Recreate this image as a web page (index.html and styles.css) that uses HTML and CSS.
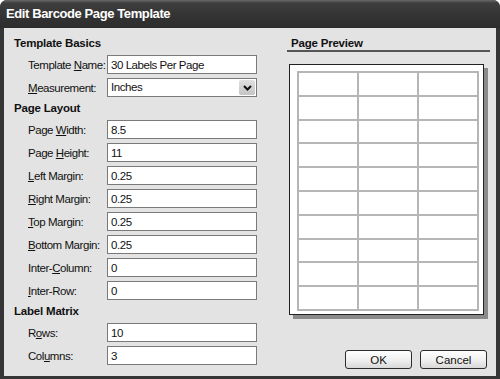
FILE: index.html
```html
<!DOCTYPE html>
<html lang="en">
<head>
    <meta charset="UTF-8">
    <title>Edit Barcode Page Template</title>
    <link rel="stylesheet" href="styles.css">
</head>
<body>
    <div class="window">
        <div class="titlebar">Edit Barcode Page Template</div>
        <div class="content">
            <!-- left side: the form -->
            <div class="form">
                <h2 class="section first">Template Basics</h2>
                <div class="row">
                    <label>Template <u>N</u>ame:</label>
                    <input type="text" value="30 Labels Per Page">
                </div>
                <div class="row">
                    <label><u>M</u>easurement:</label>
                    <div class="select">
                        <span class="select-text">Inches</span>
                        <span class="select-btn">
                            <svg width="9" height="6" viewBox="0 0 9 6"><path d="M1 1 L4.5 4.5 L8 1" fill="none" stroke="#111" stroke-width="2"/></svg>
                        </span>
                    </div>
                </div>

                <h2 class="section">Page Layout</h2>
                <div class="row"><label>Page <u>W</u>idth:</label><input type="text" value="8.5"></div>
                <div class="row"><label>Page <u>H</u>eight:</label><input type="text" value="11"></div>
                <div class="row"><label><u>L</u>eft Margin:</label><input type="text" value="0.25"></div>
                <div class="row"><label><u>R</u>ight Margin:</label><input type="text" value="0.25"></div>
                <div class="row"><label><u>T</u>op Margin:</label><input type="text" value="0.25"></div>
                <div class="row"><label><u>B</u>ottom Margin:</label><input type="text" value="0.25"></div>
                <div class="row"><label>Inter-<u>C</u>olumn:</label><input type="text" value="0"></div>
                <div class="row"><label><u>I</u>nter-Row:</label><input type="text" value="0"></div>

                <h2 class="section">Label Matrix</h2>
                <div class="row"><label>R<u>o</u>ws:</label><input type="text" value="10"></div>
                <div class="row"><label>Col<u>u</u>mns:</label><input type="text" value="3"></div>
            </div>

            <!-- right side: preview and buttons -->
            <div class="side">
                <h2 class="preview-head">Page Preview</h2>
                <div class="preview">
                    <div class="grid" id="grid"></div>
                </div>
                <div class="buttons">
                    <button class="button">OK</button>
                    <button class="button">Cancel</button>
                </div>
            </div>
        </div>
    </div>

    <script>
        // 10 rows x 3 columns of labels
        const grid = document.getElementById('grid');
        for (let i = 0; i < 30; i++) {
            const cell = document.createElement('div');
            cell.className = 'cell';
            grid.appendChild(cell);
        }
    </script>
</body>
</html>
```

FILE: styles.css
```css
body {
    margin: 0;
    background: #fff;
    font-family: "Liberation Sans", Arial, sans-serif;
    color: #111;
}

.window {
    width: 500px;
    height: 379px;
    display: flex;
    flex-direction: column;
    background: #353535;
    border-radius: 7px 7px 0 0;
    overflow: hidden;
}

.titlebar {
    height: 28px;
    padding-left: 6px;
    line-height: 28px;
    font-size: 13px;
    font-weight: bold;
    letter-spacing: -0.4px;
    color: #fff;
    background: linear-gradient(#6a6a6a 0, #3e3e3e 3px, #333 60%, #2c2c2c 100%);
}

.content {
    flex: 1;
    display: flex;
    margin: 0 4px 3px 4px;
    padding: 7px 6px 5px 10px;
    background: #e3e3e3;
}

.form {
    width: 243px;
}

.section {
    margin: 3px 0 2px 0;
    height: 16px;
    line-height: 16px;
    font-size: 11.5px;
    font-weight: bold;
    letter-spacing: -0.2px;
    white-space: nowrap;
}

.section.first {
    margin-top: 0;
}

.row {
    display: flex;
    align-items: center;
    height: 19px;
    margin-top: 4px;
}

.row label {
    flex: 0 0 93px;
    box-sizing: border-box;
    padding-left: 14px;
    font-size: 11.5px;
    letter-spacing: -0.45px;
    white-space: nowrap;
}

.row input {
    width: 150px;
    height: 19px;
    box-sizing: border-box;
    margin: 0;
    padding: 0 3px;
    border: 1px solid #7a7a7a;
    background: #fff;
    font-family: inherit;
    font-size: 11.5px;
    letter-spacing: -0.45px;
    color: #111;
}

.select {
    display: flex;
    width: 150px;
    height: 19px;
    box-sizing: border-box;
    border: 1px solid #7a7a7a;
    background: #fff;
    font-size: 11.5px;
    letter-spacing: -0.45px;
}

.select-text {
    flex: 1;
    padding-left: 3px;
    line-height: 17px;
}

.select-btn {
    width: 16px;
    margin: 1px;
    display: flex;
    align-items: center;
    justify-content: center;
    border-radius: 2px;
    background: linear-gradient(#e0e0e0, #c4c4c4);
}

.side {
    width: 203px;
    margin-left: 30px;
    display: flex;
    flex-direction: column;
}

.preview-head {
    margin: 0;
    padding-left: 4px;
    height: 15px;
    line-height: 16px;
    font-size: 11.5px;
    font-weight: bold;
    letter-spacing: -0.2px;
    border-bottom: 2px solid #555;
}

.preview {
    width: 195px;
    height: 251px;
    box-sizing: border-box;
    margin: 12px 0 0 2px;
    padding: 6px 4px 3px 7px;
    border: 1px solid #222;
    background: #fff;
    box-shadow: 4px 4px 0 #8a8a8a;
}

.grid {
    width: 182px;
    height: 240px;
    box-sizing: border-box;
    display: grid;
    grid-template-columns: repeat(3, 1fr);
    grid-template-rows: repeat(10, 1fr);
    gap: 2px;
    padding: 2px;
    background: #b6b6b6;
}

.cell {
    background: #fff;
}

.buttons {
    margin-top: auto;
    margin-bottom: 2px;
    padding-right: 3px;
    display: flex;
    justify-content: flex-end;
    gap: 8px;
}

.button {
    width: 67px;
    height: 19px;
    padding: 0;
    border: 1px solid #2d2d2d;
    border-radius: 3px;
    background: linear-gradient(#fff, #efefef 55%, #d8d8d8);
    font-family: inherit;
    font-size: 11.5px;
    color: #111;
}
```
